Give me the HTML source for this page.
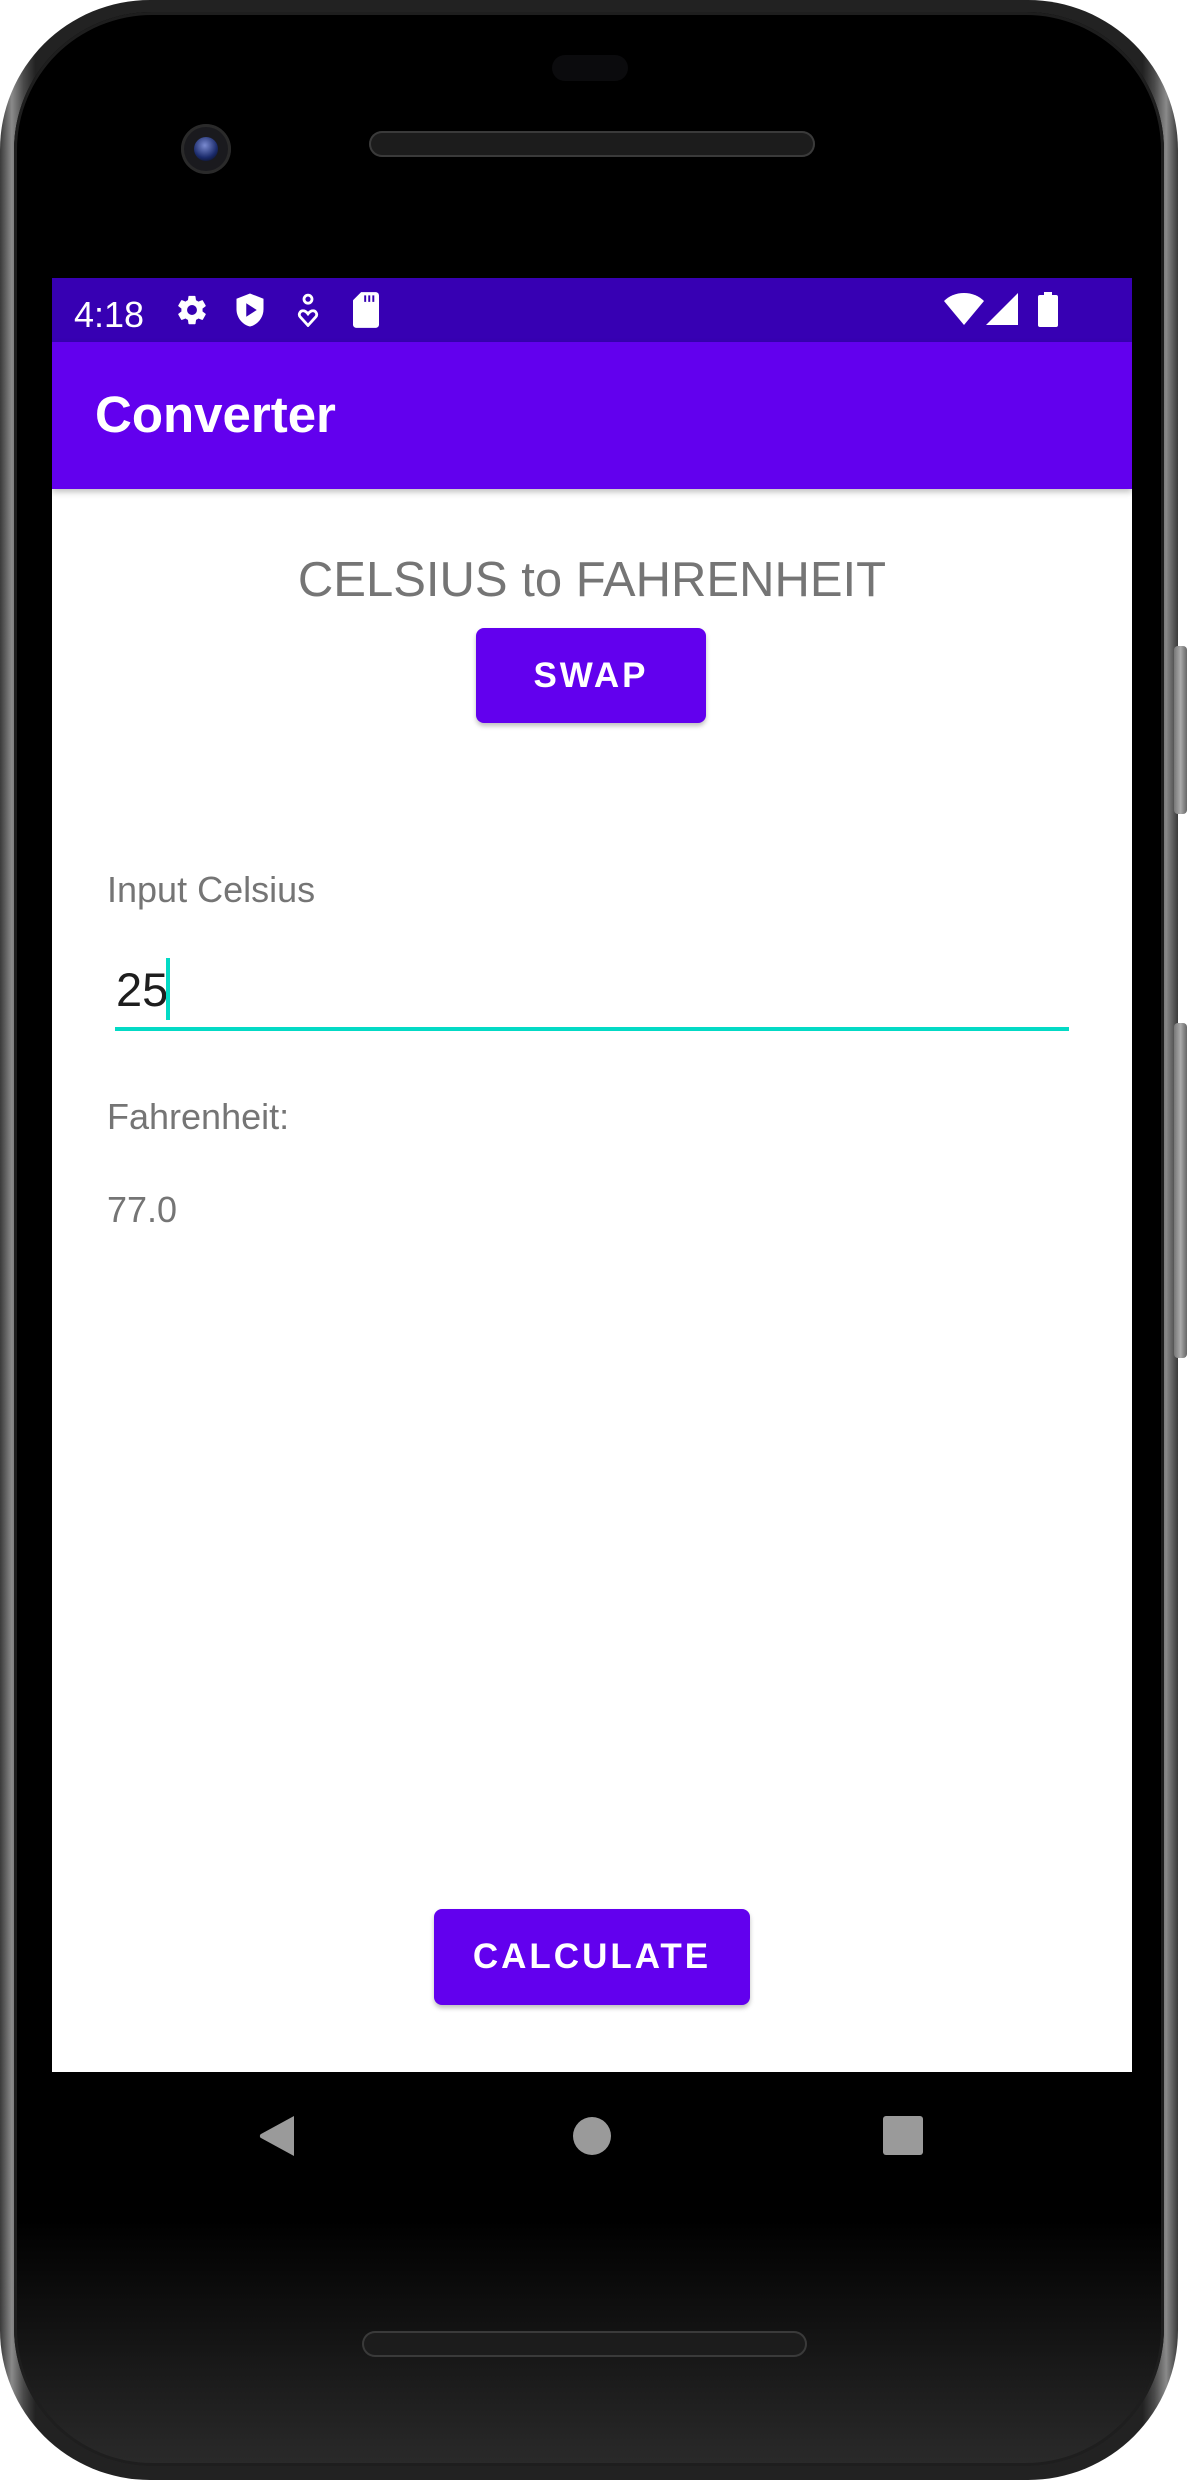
<!DOCTYPE html>
<html><head><meta charset="utf-8"><style>
*{margin:0;padding:0;box-sizing:border-box}
body{width:1194px;height:2480px;background:#fff;position:relative;overflow:hidden;font-family:"Liberation Sans",sans-serif}
.abs{position:absolute}
#body{left:0;top:0;width:1178px;height:2480px;border-radius:150px;background:linear-gradient(90deg,#3a3a3a,#8a8a8a 1%,#4a4a4a 2%,#222 3%,#222 97%,#4a4a4a 98%,#8a8a8a 99%,#3a3a3a)}
#bezel{left:14px;top:12px;width:1150px;height:2454px;border-radius:138px;background:linear-gradient(#000,#000 90%,#2a2a2a);box-shadow:inset 0 0 0 3px #1e1e1e}
.btn{background:linear-gradient(90deg,#777,#aaa,#666);border-radius:4px}
#screen{left:52px;top:278px;width:1080px;height:1794px;background:#fff;overflow:hidden}
#status{left:0;top:0;width:1080px;height:64px;background:#3700B3}
#appbar{left:0;top:64px;width:1080px;height:147px;background:#6200EE;box-shadow:0 3px 6px rgba(0,0,0,.25)}
.t{white-space:nowrap;line-height:1}
.pbtn{background:#6200EE;border-radius:8px;color:#fff;font-weight:bold;text-align:center;letter-spacing:3px;box-shadow:0 3px 5px rgba(0,0,0,.25)}
</style></head><body>
<div id="body" class="abs"></div>
<div class="abs btn" style="left:1174px;top:646px;width:13px;height:168px"></div>
<div class="abs btn" style="left:1174px;top:1023px;width:13px;height:335px"></div>
<div id="bezel" class="abs"></div>
<div class="abs" style="left:552px;top:55px;width:76px;height:26px;border-radius:13px;background:#0b0b0d"></div>
<div class="abs" style="left:181px;top:124px;width:50px;height:50px;border-radius:50%;background:#1a1a1e;box-shadow:inset 0 0 0 3px #2a2a2a"></div>
<div class="abs" style="left:194px;top:137px;width:24px;height:24px;border-radius:50%;background:radial-gradient(circle at 45% 35%,#7a8ad0,#1a2a6a 60%,#05050a)"></div>
<div class="abs" style="left:369px;top:131px;width:446px;height:26px;border-radius:13px;background:#1c1c1c;box-shadow:inset 0 0 0 2px #3a3a3a"></div>
<div class="abs" style="left:362px;top:2331px;width:445px;height:26px;border-radius:13px;background:#1c1c1c;box-shadow:inset 0 0 0 2px #3a3a3a"></div>

<div id="screen" class="abs">
  <div id="status" class="abs">
    <div class="abs t" style="left:22px;top:19px;font-size:36px;color:#fff">4:18</div>
    <svg class="abs" style="left:123px;top:15px" width="34" height="34" viewBox="0 0 24 24"><path fill="#fff" d="M19.4 13c.04-.3.06-.6.06-1s-.02-.7-.06-1l2.1-1.6c.2-.15.24-.42.12-.64l-2-3.460c-.12-.22-.39-.3-.61-.22l-2.5 1c-.52-.4-1.08-.73-1.690-.98l-.38-2.65A.49.49 0 0 0 14 2h-4c-.25 0-.46.18-.49.42l-.38 2.65c-.61.25-1.170.59-1.690.98l-2.49-1c-.23-.09-.49 0-.61.22l-2 3.46c-.13.22-.07.49.12.64L4.57 11c-.04.32-.07.65-.07 1s.03.68.07 1l-2.11 1.65c-.19.15-.24.42-.12.64l2 3.46c.12.22.39.3.61.22l2.49-1c.52.4 1.080.73 1.690.98l.38 2.65c.03.24.24.42.49.42h4c.25 0 .46-.18.49-.42l.38-2.65c.61-.25 1.17-.59 1.69-.98l2.49 1c.23.09.49 0 .61-.22l2-3.46c.12-.22.07-.49-.12-.64L19.4 13zM12 15.5A3.5 3.5 0 1 1 12 8.5a3.5 3.5 0 0 1 0 7z"/></svg>
    <svg class="abs" style="left:183px;top:14px" width="30" height="36" viewBox="0 0 20 24"><path fill="#fff" d="M10 1L1 4.5v7c0 5.5 3.8 10.3 9 11.5 5.2-1.2 9-6 9-11.5v-7z"/><path fill="#3700B3" d="M7.5 7.5v9l7-4.5z"/></svg>
    <svg class="abs" style="left:245px;top:15px" width="22" height="34" viewBox="0 0 14 22"><circle cx="7" cy="4" r="2.6" fill="none" stroke="#fff" stroke-width="1.8"/><path d="M7 21l-5-5.5c-1.5-1.7 0-4.2 2-4 1.3.1 2.2 1 3 2 .8-1 1.7-1.9 3-2 2-.2 3.5 2.3 2 4z" fill="none" stroke="#fff" stroke-width="1.8"/></svg>
    <svg class="abs" style="left:301px;top:14px" width="26" height="36" viewBox="0 0 16 22"><path fill="#fff" d="M5 0h9a2 2 0 0 1 2 2v18a2 2 0 0 1-2 2H2a2 2 0 0 1-2-2V5z"/><path stroke="#3700B3" stroke-width="1.2" d="M7.5 2v4M10 2v4M12.5 2v4"/></svg>
    <svg class="abs" style="left:892px;top:15px" width="40" height="32" viewBox="0 0 40 32"><path fill="#fff" d="M20 32L0 8C5 3 12 0 20 0s15 3 20 8z"/></svg>
    <svg class="abs" style="left:934px;top:15px" width="32" height="32" viewBox="0 0 32 32"><path fill="#fff" d="M32 0v32H0z"/></svg>
    <svg class="abs" style="left:986px;top:14px" width="20" height="35" viewBox="0 0 20 35"><path fill="#fff" d="M6 0h8v3h4a2 2 0 0 1 2 2v28a2 2 0 0 1-2 2H2a2 2 0 0 1-2-2V5a2 2 0 0 1 2-2h4z"/></svg>
  </div>
  <div id="appbar" class="abs">
    <div class="abs t" style="left:43px;top:47px;font-size:51px;font-weight:bold;color:#fff">Converter</div>
  </div>
  <div class="abs t" style="left:0;width:1080px;text-align:center;top:278px;font-size:49px;color:#757575">CELSIUS to FAHRENHEIT</div>
  <div class="abs pbtn" style="left:424px;top:350px;width:230px;height:95px;line-height:95px;font-size:35px">SWAP</div>
  <div class="abs t" style="left:55px;top:594px;font-size:36px;color:#757575">Input Celsius</div>
  <div class="abs t" style="left:64px;top:688px;font-size:47px;color:#1e1e1e">25</div>
  <div class="abs" style="left:114px;top:680px;width:4px;height:62px;background:#03DAC5"></div>
  <div class="abs" style="left:63px;top:749px;width:954px;height:4px;background:#03DAC5"></div>
  <div class="abs t" style="left:55px;top:821px;font-size:36px;color:#757575">Fahrenheit:</div>
  <div class="abs t" style="left:55px;top:914px;font-size:36px;color:#757575">77.0</div>
  <div class="abs pbtn" style="left:382px;top:1631px;width:316px;height:96px;line-height:96px;font-size:35px">CALCULATE</div>
</div>
<svg class="abs" style="left:259px;top:2115px" width="36" height="42" viewBox="0 0 36 42"><path fill="#9a9a9a" d="M35 1v40L2 23c-1.5-1-1.5-3 0-4z"/></svg>
<div class="abs" style="left:573px;top:2117px;width:38px;height:38px;border-radius:50%;background:#9a9a9a"></div>
<div class="abs" style="left:883px;top:2116px;width:40px;height:39px;border-radius:3px;background:#9a9a9a"></div>
</body></html>
